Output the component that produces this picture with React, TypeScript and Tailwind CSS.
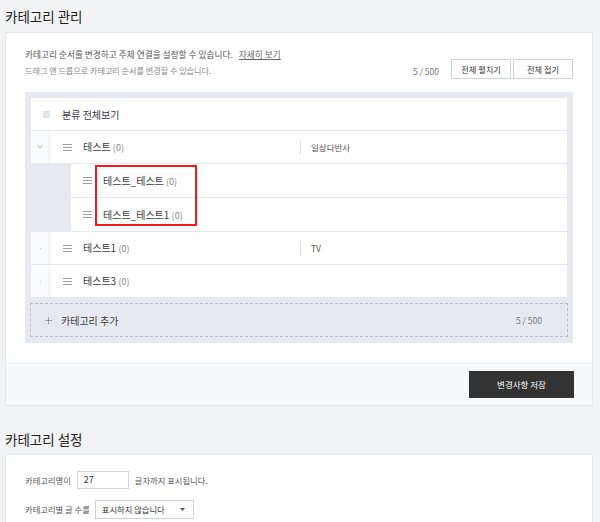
import { Plus } from "lucide-react";

const font = "font-['Noto_Sans_CJK_KR','Noto_Sans',sans-serif]";

function Handle({ light = false }: { light?: boolean }) {
  return (
    <svg width="9" height="7" viewBox="0 0 9 7" className="shrink-0">
      <g stroke={light ? "#d6d9de" : "#9a9ea5"} strokeWidth="1">
        <line x1="0" y1="0.5" x2="9" y2="0.5" />
        <line x1="0" y1="3.5" x2="9" y2="3.5" />
        <line x1="0" y1="6.5" x2="9" y2="6.5" />
      </g>
    </svg>
  );
}

function Chevron() {
  return (
    <svg width="6" height="4" viewBox="0 0 6 4">
      <path d="M0.5 0.5 L3 3 L5.5 0.5" fill="none" stroke="#9a9ea5" strokeWidth="0.9" />
    </svg>
  );
}

interface RowProps {
  name: string;
  topic?: string;
  open?: boolean;
}

function ParentRow({ name, topic, open }: RowProps) {
  return (
    <div className="flex h-[33px] items-center border-b border-[#e6e8ec]">
      <div className="flex h-full w-[19px] shrink-0 items-center justify-center border-r border-[#eef0f3] bg-[#fafbfc]">
        {open ? <Chevron /> : <span className="h-[1px] w-[1px] bg-[#c5c8cd]" />}
      </div>
      <div className="ml-[13px]">
        <Handle />
      </div>
      <div className="ml-[11px] w-[217px] text-[10px] text-[#3a3a3a]">
        {name} <span className="text-[9px] text-[#888]">(0)</span>
      </div>
      {topic && (
        <>
          <div className="h-[13px] w-px bg-[#dcdee2]" />
          <div className="ml-[10px] text-[8.5px] text-[#555]">{topic}</div>
        </>
      )}
    </div>
  );
}

function ChildRow({ name }: { name: string }) {
  return (
    <div className="flex h-[34px] items-center">
      <div className="h-full w-[40px] shrink-0 bg-[#e6e9f0]" />
      <div className="flex h-full flex-1 items-center border-b border-[#e6e8ec] bg-white">
        <div className="ml-[12px]">
          <Handle />
        </div>
        <div className="ml-[11px] text-[10px] text-[#3a3a3a]">
          {name} <span className="text-[9px] text-[#888]">(0)</span>
        </div>
      </div>
    </div>
  );
}

export default function App() {
  return (
    <div className={`min-h-[522px] w-[600px] bg-[#f2f3f5] ${font}`}>
      <h2 className="px-[5px] text-[13.5px] leading-[32px] text-[#222]">카테고리 관리</h2>

      <div className="ml-[5px] w-[588px] border border-[#e4e6ea] bg-white">
        <div className="px-[19px] pt-[14px] pb-[20px]">
          <div className="flex items-end justify-between">
            <div className="leading-[16px]">
              <p className="text-[8.7px] text-[#555]">
                카테고리 순서를 변경하고 주제 연결을 설정할 수 있습니다.
                <span className="ml-[6px] text-[#666] underline">자세히 보기</span>
              </p>
              <p className="text-[8.1px] text-[#888]">
                드래그 앤 드롭으로 카테고리 순서를 변경할 수 있습니다.
              </p>
            </div>
            <div className="flex items-center">
              <span className="mr-[12px] mt-[4px] text-[8.5px] text-[#777]">5 / 500</span>
              <button className="h-[20px] w-[60px] border border-[#cfd2d6] bg-white text-[8.2px] text-[#333]">
                전체 펼치기
              </button>
              <button className="ml-[2px] h-[20px] w-[60px] border border-[#cfd2d6] bg-white text-[8.2px] text-[#333]">
                전체 접기
              </button>
            </div>
          </div>

          <div className="mt-[13px] bg-[#e6e9f0] p-[6px]">
            <div className="bg-white">
              <div className="flex h-[33px] items-center border-b border-[#e6e8ec]">
                <div className="ml-[12px] h-[7px] w-[7px] bg-[#e4e6e9]" />
                <span className="ml-[12px] text-[10px] text-[#3a3a3a]">분류 전체보기</span>
              </div>
              <ParentRow name="테스트" topic="일상다반사" open />
              <div className="relative">
                <ChildRow name="테스트_테스트" />
                <ChildRow name="테스트_테스트1" />
                <div className="absolute left-[64px] top-[1px] h-[61px] w-[102px] border-2 border-[#ee1c1c]" />
              </div>
              <ParentRow name="테스트1" topic="TV" />
              <ParentRow name="테스트3" />
            </div>
            <div className="mx-[-1px] mt-[5px] flex h-[34px] items-center border border-dashed border-[#b9bcc2] bg-[#e6e9f0] pr-[25px]">
              <Plus size={11} strokeWidth={1.2} className="ml-[12px] text-[#666]" />
              <span className="ml-[7px] text-[10px] text-[#3a3a3a]">카테고리 추가</span>
              <span className="ml-auto text-[8.5px] text-[#777]">5 / 500</span>
            </div>
          </div>
        </div>

        <div className="flex justify-end border-t border-[#eceef1] bg-[#f8f9fb] pt-[7px] pb-[7px] pr-[18px]">
          <button className="h-[27px] w-[105px] bg-[#333] text-[8.5px] text-white">변경사항 저장</button>
        </div>
      </div>

      <h2 className="mt-[18px] px-[5px] text-[13.5px] leading-[30px] text-[#222]">카테고리 설정</h2>

      <div className="ml-[5px] w-[588px] border border-[#e4e6ea] bg-white px-[19px] pt-[16px] pb-[10px]">
        <div className="flex items-center text-[8.3px] text-[#555]">
          <span>카테고리명이</span>
          <div className="ml-[6px] flex h-[18px] w-[52px] items-center border border-[#d5d8dc] pl-[6px] text-[9px] text-[#333]">
            27
          </div>
          <span className="ml-[6px]">글자까지 표시됩니다.</span>
        </div>
        <div className="mt-[11px] flex items-center text-[8.3px] text-[#555]">
          <span>카테고리별 글 수를</span>
          <div className="ml-[5px] flex h-[19px] w-[99px] items-center border border-[#cfd2d6] pl-[6px] text-[8.3px] text-[#333]">
            표시하지 않습니다
            <svg width="5" height="3" viewBox="0 0 5 3" className="ml-auto mr-[8px]">
              <path d="M0 0 H5 L2.5 3 Z" fill="#555" />
            </svg>
          </div>
        </div>
      </div>
    </div>
  );
}
